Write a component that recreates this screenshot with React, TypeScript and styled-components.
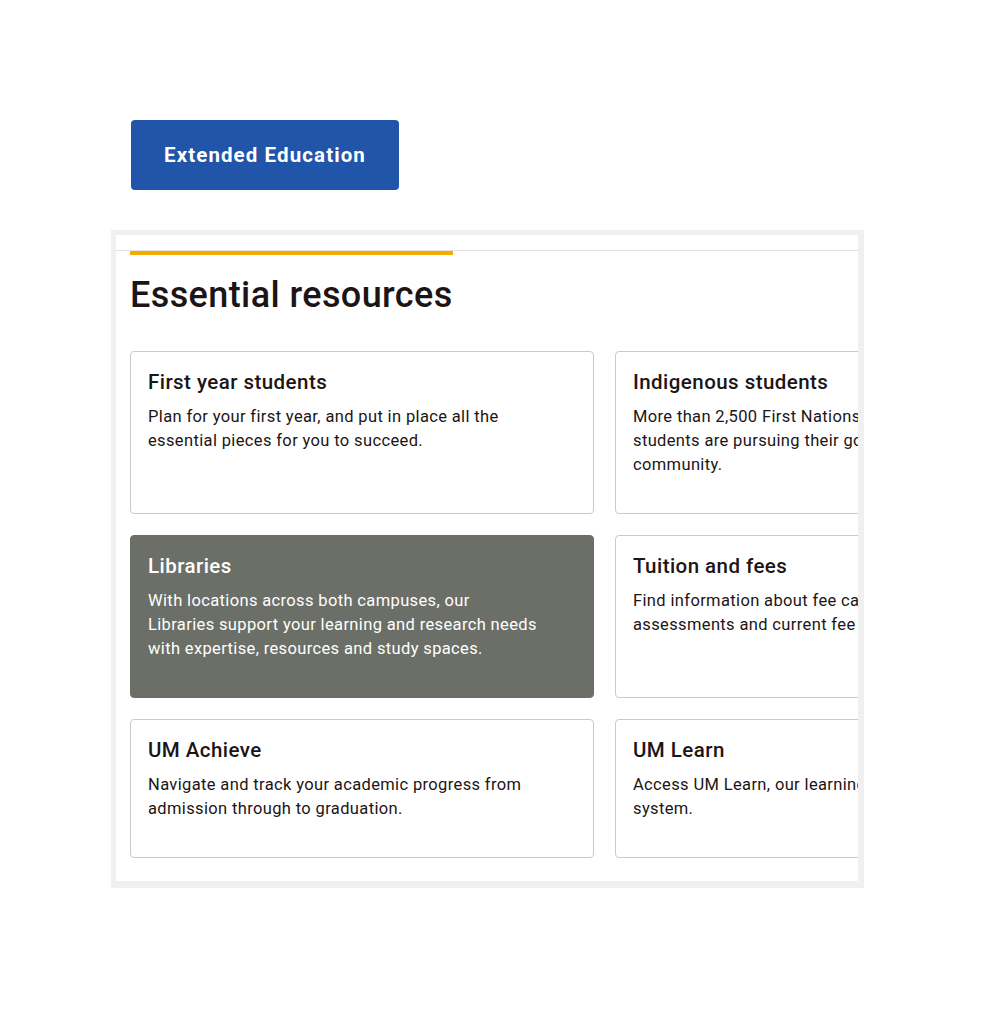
import styled, { createGlobalStyle } from "styled-components";

const GlobalStyle = createGlobalStyle`
  body {
    margin: 0;
    background: #fff;
    font-family: Roboto, "Liberation Sans", Arial, sans-serif;
  }
`;

const Page = styled.div`
  padding: 120px 0 40px 111px;
`;

const CtaButton = styled.a`
  display: inline-flex;
  align-items: center;
  justify-content: center;
  margin-left: 20px;
  width: 268px;
  height: 70px;
  box-sizing: border-box;
  background: #2055a9;
  border-radius: 4px;
  color: #fff;
  font-size: 20.5px;
  font-weight: 700;
  letter-spacing: 1.1px;
  text-decoration: none;
`;

const Frame = styled.div`
  margin-top: 40px;
  width: 753px;
  box-sizing: border-box;
  border-style: solid;
  border-color: #f0f0f0;
  border-width: 5px 6px 7px 5px;
  background: #fff;
  padding-top: 15px;
  overflow: hidden;
`;

const Section = styled.section`
  border-top: 1px solid #e2e2e2;
  padding: 0 0 23px 14px;
`;

const Heading = styled.h2`
  display: inline-block;
  margin: 0;
  padding-top: 19px;
  border-top: 4px solid #f6ab00;
  font-size: 36px;
  font-weight: 500;
  line-height: 43px;
  letter-spacing: 0.4px;
  color: #1d1515;
`;

const Grid = styled.div`
  display: grid;
  grid-template-columns: 464px 464px;
  gap: 21px;
  margin-top: 34px;
`;

const Card = styled.a<{ $dark?: boolean }>`
  display: block;
  box-sizing: border-box;
  padding: 18px 18px 36px 17px;
  border: 1px solid ${(p) => (p.$dark ? "#6b6f67" : "#cacaca")};
  border-radius: 4px;
  background: ${(p) => (p.$dark ? "#6b6f67" : "#fff")};
  color: ${(p) => (p.$dark ? "#fff" : "#1d1515")};
  text-decoration: none;
`;

const CardTitle = styled.h3`
  margin: 0 0 11px;
  font-size: 20.5px;
  font-weight: 500;
  line-height: 24px;
  letter-spacing: 0.45px;
`;

const CardText = styled.p`
  margin: 0;
  max-width: 392px;
  font-size: 16.5px;
  line-height: 24px;
  letter-spacing: 0.36px;
`;

const resources = [
  {
    title: "First year students",
    text: "Plan for your first year, and put in place all the essential pieces for you to succeed.",
  },
  {
    title: "Indigenous students",
    text: "More than 2,500 First Nations, Métis and Inuit students are pursuing their goals in our community.",
  },
  {
    title: "Libraries",
    text: "With locations across both campuses, our Libraries support your learning and research needs with expertise, resources and study spaces.",
    dark: true,
  },
  {
    title: "Tuition and fees",
    text: "Find information about fee calculations, assessments and current fee schedules.",
  },
  {
    title: "UM Achieve",
    text: "Navigate and track your academic progress from admission through to graduation.",
  },
  {
    title: "UM Learn",
    text: "Access UM Learn, our learning management system.",
  },
];

const App = () => {
  return (
    <Page>
      <GlobalStyle />
      <CtaButton href="#">Extended Education</CtaButton>
      <Frame>
        <Section>
          <Heading>Essential resources</Heading>
          <Grid>
            {resources.map((item) => (
              <Card key={item.title} href="#" $dark={item.dark}>
                <CardTitle>{item.title}</CardTitle>
                <CardText>{item.text}</CardText>
              </Card>
            ))}
          </Grid>
        </Section>
      </Frame>
    </Page>
  );
};

export default App;
